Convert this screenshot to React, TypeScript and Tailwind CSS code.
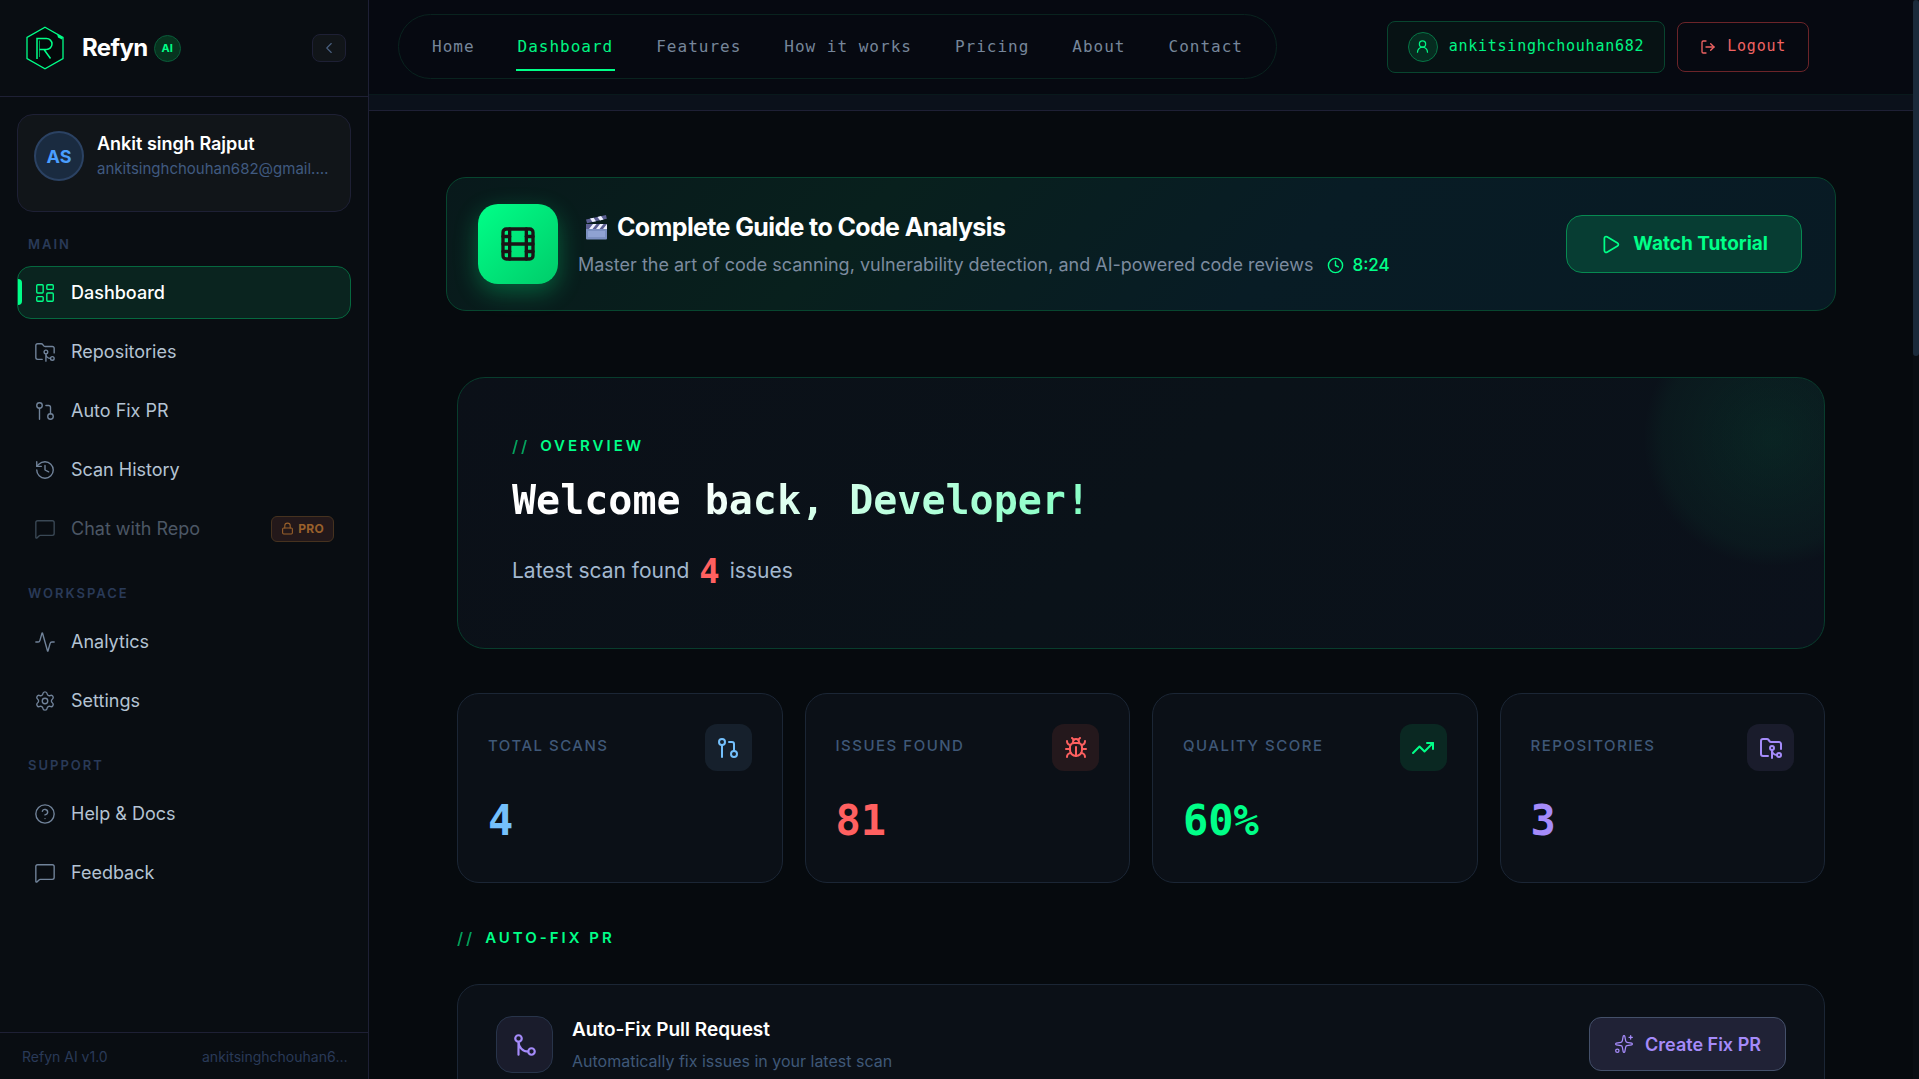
import React from "react";
import {
  Activity,
  Bug,
  ChevronLeft,
  CircleHelp,
  Clock,
  Film,
  GitMerge,
  GitPullRequest,
  History,
  LayoutDashboard,
  Lock,
  LogOut,
  MessageSquare,
  Play,
  Settings,
  Sparkles,
  TrendingUp,
  UserRound,
} from "lucide-react";

type IconType = React.ComponentType<{ size?: number; strokeWidth?: number; className?: string }>;

function FolderBranch({ size = 22, strokeWidth = 1.5, className }: { size?: number; strokeWidth?: number; className?: string }) {
  return (
    <svg width={size} height={size} viewBox="0 0 24 24" fill="none" stroke="currentColor" strokeWidth={strokeWidth} strokeLinecap="round" strokeLinejoin="round" className={className} aria-hidden="true">
      <path d="M9 20H4a2 2 0 0 1-2-2V5a2 2 0 0 1 2-2h3.9a2 2 0 0 1 1.69.9l.81 1.2a2 2 0 0 0 1.67.9H20a2 2 0 0 1 2 2v5" />
      <circle cx="13" cy="12" r="2" />
      <path d="M18 19c-2.8 0-5-2.2-5-5v8" />
      <circle cx="20" cy="19" r="2" />
    </svg>
  );
}

function Logo() {
  return (
    <svg width="38" height="44" viewBox="0 0 38 44" fill="none" stroke="#00ff88" aria-hidden="true">
      <path d="M19 1.2 37 11.5v21L19 42.8 1 32.5v-21Z" fill="#04080a" strokeWidth="1.3" />
      <path d="M11 33V12.500h9.500a5.500 5.500 0 0 1 0 11H13.500M18 23.500l6.500 9" strokeWidth="1.500" />
      <path d="M13.500 14.500V31" strokeWidth="1" opacity=".6" />
      <path d="m31 8 6 3.500-1 2-4-2Z" fill="#00ff88" stroke="none" />
    </svg>
  );
}

function Clapper() {
  return (
    <svg width="24" height="26" viewBox="0 0 24 26" aria-hidden="true">
      <rect x="2" y="10" width="21" height="15.500" rx="1" fill="#7b8fc0" />
      <rect x="2" y="10" width="21" height="5" fill="#5c5f93" />
      <path d="m5 15 4-5h3.500l-4 5ZM12 15l4-5h3.500l-4 5ZM19 15l4-5v5Z" fill="#eef0ff" />
      <path d="M2 5.500 22 1l.8 3.800L3 9.300Z" fill="#5c5f93" />
      <path d="m6 4.600 3.500-.8 2.500 3.500-3.500.8ZM13.500 2.900l3.500-.8 2.500 3.500-3.500.8Z" fill="#eef0ff" />
      <rect x="4" y="17" width="17" height="6" fill="#8fa2d2" />
    </svg>
  );
}

type Item = { label: string; icon: IconType; active?: boolean; pro?: boolean };

const groups: { title: string; items: Item[] }[] = [
  {
    title: "MAIN",
    items: [
      { label: "Dashboard", icon: LayoutDashboard, active: true },
      { label: "Repositories", icon: FolderBranch },
      { label: "Auto Fix PR", icon: GitPullRequest },
      { label: "Scan History", icon: History },
      { label: "Chat with Repo", icon: MessageSquare, pro: true },
    ],
  },
  {
    title: "WORKSPACE",
    items: [
      { label: "Analytics", icon: Activity },
      { label: "Settings", icon: Settings },
    ],
  },
  {
    title: "SUPPORT",
    items: [
      { label: "Help & Docs", icon: CircleHelp },
      { label: "Feedback", icon: MessageSquare },
    ],
  },
];

function NavItem({ label, icon: Icon, active, pro }: Item) {
  if (active) {
    return (
      <a href="#" aria-current="page" className="relative flex h-[53px] items-center gap-[15px] rounded-[14px] border border-[#06683f] bg-[#0a241f] px-4 text-[18px] font-medium text-white">
        <span className="absolute left-0 top-3 h-[26px] w-1 rounded-r bg-[#00ff88]" />
        <Icon size={22} strokeWidth={1.5} className="text-[#00ff88]" />
        {label}
      </a>
    );
  }
  return (
    <a href="#" className={pro ? "flex h-[53px] items-center gap-[15px] rounded-[14px] px-[17px] text-[18px] text-[#4c5765]" : "flex h-[53px] items-center gap-[15px] rounded-[14px] px-[17px] text-[18px] text-[#b4c3d3]"}>
      <Icon size={22} strokeWidth={1.5} className={pro ? "text-[#3a4855]" : "text-[#71839a]"} />
      {label}
      {pro && (
        <span className="ml-auto flex h-[26px] items-center gap-1 rounded-md border border-[#46321f] bg-[#23181a] px-[9px] text-[12px] font-bold tracking-wide text-[#99602b]">
          <Lock size={13} strokeWidth={2} />
          PRO
        </span>
      )}
    </a>
  );
}

function Sidebar() {
  return (
    <aside className="flex w-[369px] shrink-0 flex-col border-r border-[#1e2035] bg-[#090d12]">
      <div className="flex h-[97px] items-center border-b border-[#1e2035] pl-[26px] pr-[22px]">
        <Logo />
        <span className="ml-[18px] text-[24px] font-bold tracking-tight text-white">Refyn</span>
        <span className="ml-1.5 flex size-[27px] items-center justify-center rounded-full border border-[#0a5c3a] bg-[#07331f] text-[11px] font-bold text-[#00ff88]">AI</span>
        <button aria-label="Collapse sidebar" className="ml-auto flex h-7 w-[34px] items-center justify-center rounded-lg border border-[#1e2035] bg-[#111519] text-[#4a6080]">
          <ChevronLeft size={18} strokeWidth={1.5} />
        </button>
      </div>
      <div className="flex flex-1 flex-col px-[17px] pt-[17px]">
        <div className="flex h-[98px] items-start gap-[13px] rounded-2xl border border-[#1e2035] bg-[#111519] p-4">
          <div className="flex size-[50px] shrink-0 items-center justify-center rounded-full border-2 border-[#2b4263] bg-[#1a2b40] text-[18px] font-bold text-[#4a9eff]">AS</div>
          <div className="min-w-0 flex-1 pt-px">
            <p className="truncate text-[18px] font-semibold leading-6 text-white">Ankit singh Rajput</p>
            <p className="truncate text-[15px] leading-[26px] text-[#405a80]">ankitsinghchouhan682@gmail.com</p>
          </div>
        </div>
        <nav aria-label="Sidebar" className="flex flex-col gap-7 pt-[22px]">
          {groups.map((g) => (
            <div key={g.title}>
              <h2 className="mb-3 pl-[11px] text-[13px] font-semibold leading-5 tracking-[2px] text-[#293a58]">{g.title}</h2>
              <div className="flex flex-col gap-1.5">
                {g.items.map((i) => (
                  <NavItem key={i.label} {...i} />
                ))}
              </div>
            </div>
          ))}
        </nav>
      </div>
      <div className="flex h-[47px] items-center justify-between border-t border-[#1e2035] pl-[22px] pr-[18px] text-[14px] text-[#293a58]">
        <span>Refyn AI v1.0</span>
        <span className="w-[148px] truncate">ankitsinghchouhan682</span>
      </div>
    </aside>
  );
}

const links = ["Home", "Dashboard", "Features", "How it works", "Pricing", "About", "Contact"];

function TopBar() {
  return (
    <>
      <header className="flex h-[94px] shrink-0 items-start justify-between bg-[#060911] pl-[29px] pr-[104px] pt-3.5">
        <nav aria-label="Main" className="flex h-[65px] items-center gap-[39px] rounded-full border border-[#09231f] px-[31px] font-['DejaVu_Sans_Mono',monospace] text-[16px] tracking-[1px] text-[#76869a]">
          {links.map((l) => (
            <a key={l} href="#" className={l === "Dashboard" ? "relative px-0.5 text-[#00f583] after:absolute after:inset-x-0 after:-bottom-3 after:h-0.5 after:bg-[#00ff88]" : "px-0.5"}>
              {l}
            </a>
          ))}
        </nav>
        <div className="flex h-[65px] items-center gap-3 font-['DejaVu_Sans_Mono',monospace] text-[15px]">
          <button className="flex h-[52px] items-center gap-[11px] rounded-lg border border-[#08452f] bg-[#071214] px-5 tracking-wider text-[#00f583]">
            <span className="flex size-[30px] items-center justify-center rounded-full border border-[#077546] bg-[#062c20]">
              <UserRound size={15} strokeWidth={2} />
            </span>
            ankitsinghchouhan682
          </button>
          <button className="flex h-[50px] items-center gap-[11px] rounded-lg border border-[#6b2429] px-[22px] tracking-wider text-[#f06363]">
            <LogOut size={16} strokeWidth={2} />
            Logout
          </button>
        </div>
      </header>
      <div className="h-[17px] shrink-0 border-b border-t border-b-[#1e2035] border-t-[#09191c] bg-[#0b111b]" />
    </>
  );
}

function Banner() {
  return (
    <section className="flex h-[134px] items-center rounded-[20px] border border-[#07462f] bg-[linear-gradient(135deg,#08191b_0%,#08201d_30%,#081c25_60%,#081a24_100%)] pl-[31px] pr-[33px]">
      <div className="flex size-20 shrink-0 items-center justify-center rounded-[20px] bg-[linear-gradient(135deg,#00ff88,#00cc6a)] text-[#1a1416] shadow-[0_8px_24px_rgba(0,255,136,0.3)]">
        <Film size={40} strokeWidth={2} />
      </div>
      <div className="ml-5 min-w-0">
        <h1 className="flex items-center gap-[9px] pl-1.5 text-[25px] font-bold leading-9 tracking-tight text-white">
          <Clapper />
          Complete Guide to Code Analysis
        </h1>
        <p className="mt-1.5 flex items-center whitespace-nowrap text-[18px] leading-7 text-[#7c8b9f]">
          Master the art of code scanning, vulnerability detection, and AI-powered code reviews
          <span className="ml-3.5 flex items-center gap-2 text-[17px] font-medium text-[#00ff88]">
            <Clock size={17} strokeWidth={2} />
            8:24
          </span>
        </p>
      </div>
      <button className="ml-auto flex h-[58px] shrink-0 items-center gap-3 rounded-2xl border border-[#078a51] bg-[#073d33] px-[33px] text-[19px] font-bold text-[#00ff88]">
        <Play size={21} strokeWidth={2} />
        Watch Tutorial
      </button>
    </section>
  );
}

function SectionLabel({ children }: { children: React.ReactNode }) {
  return (
    <h2 className="flex items-center gap-2.5 text-[15px] font-semibold leading-6 tracking-[3px] text-[#00ff88]">
      <span className="text-[16px] opacity-60">//</span>
      {children}
    </h2>
  );
}

function Welcome() {
  return (
    <section className="relative h-[272px] overflow-hidden rounded-[28px] border border-[#083d2d] bg-[linear-gradient(135deg,#0b1018_0%,#0a1219_50%,#0b111b_100%)] px-[54px] pt-14">
      <div className="absolute -right-[78px] -top-[70px] size-[260px] rounded-full bg-[radial-gradient(circle,rgba(0,255,136,0.08)_0%,rgba(0,255,136,0.03)_60%,transparent_70%)]" />
      <SectionLabel>OVERVIEW</SectionLabel>
      <p className="mt-4 w-fit bg-[linear-gradient(135deg,#ffffff_30%,#7dffc0_100%)] bg-clip-text font-['DejaVu_Sans_Mono',monospace] text-[40px] font-bold leading-[52px] text-transparent">Welcome back, Developer!</p>
      <p className="mt-5 flex items-center gap-2.5 text-[21px] leading-[50px] text-[#a3b8cf]">
        Latest scan found
        <strong className="font-['DejaVu_Sans_Mono',monospace] text-[34px] font-bold text-[#ff6060]">4</strong>
        issues
      </p>
    </section>
  );
}

const stats: { label: string; value: string; icon: IconType; tone: string; box: string }[] = [
  { label: "TOTAL SCANS", value: "4", icon: GitPullRequest, tone: "text-[#74c0fc]", box: "bg-[#16202c] text-[#74c0fc]" },
  { label: "ISSUES FOUND", value: "81", icon: Bug, tone: "text-[#ff6060]", box: "bg-[#24181c] text-[#ff6060]" },
  { label: "QUALITY SCORE", value: "60%", icon: TrendingUp, tone: "text-[#00ff88]", box: "bg-[#0a2822] text-[#00ff88]" },
  { label: "REPOSITORIES", value: "3", icon: FolderBranch, tone: "text-[#a58bfa]", box: "bg-[#1a1c2c] text-[#a58bfa]" },
];

function Stats() {
  return (
    <section aria-label="Statistics" className="grid grid-cols-4 gap-[22px]">
      {stats.map(({ label, value, icon: Icon, tone, box }) => (
        <div key={label} className="h-[190px] rounded-[22px] border border-[#1b2635] bg-[#0b1017] px-[30px] pt-[30px]">
          <div className="flex items-start justify-between">
            <h3 className="pt-2.5 text-[15px] font-medium leading-6 tracking-widest text-[#3f5878]">{label}</h3>
            <span className={`flex size-[47px] items-center justify-center rounded-xl ${box}`}>
              <Icon size={24} strokeWidth={2} />
            </span>
          </div>
          <p className={`mt-[25px] font-['DejaVu_Sans_Mono',monospace] text-[42px] font-bold leading-[50px] ${tone}`}>{value}</p>
        </div>
      ))}
    </section>
  );
}

function AutoFix() {
  return (
    <section className="mt-[34px] flex items-start rounded-[22px] border border-[#1b2635] bg-[#0b1017] p-[38px] pt-[31px]">
      <span className="flex size-[57px] shrink-0 items-center justify-center rounded-2xl border border-[#28344a] bg-[#1a1c2c] text-[#a58bfa]">
        <GitMerge size={26} strokeWidth={2} />
      </span>
      <div className="ml-[19px]">
        <h3 className="text-[19px] font-semibold leading-[28px] text-white">Auto-Fix Pull Request</h3>
        <p className="mt-1 text-[16px] leading-[26px] text-[#3f5878]">Automatically fix issues in your latest scan</p>
      </div>
      <button className="ml-auto mt-px flex h-[54px] items-center gap-[11px] rounded-xl border border-[#44506a] bg-[#202236] px-6 text-[18px] font-semibold text-[#a58bfa]">
        <Sparkles size={20} strokeWidth={1.5} />
        Create Fix PR
      </button>
    </section>
  );
}

export default function App() {
  return (
    <div className="flex h-screen overflow-hidden bg-[#060a0e] font-['Inter',sans-serif]">
      <Sidebar />
      <div className="flex min-w-0 flex-1 flex-col pr-1.5">
        <TopBar />
        <main className="min-h-0 flex-1 overflow-hidden px-[77px] pt-[66px]">
          <Banner />
          <div className="px-[11px] pt-[66px]">
            <Welcome />
            <div className="mt-11">
              <Stats />
            </div>
            <div className="mt-[43px]">
              <SectionLabel>AUTO-FIX PR</SectionLabel>
            </div>
            <AutoFix />
          </div>
        </main>
      </div>
      <div aria-hidden="true" className="absolute right-0 top-0 h-full w-1.5 bg-[#090d12]">
        <div className="h-[33%] rounded bg-[#1b2a3a]" />
      </div>
    </div>
  );
}
